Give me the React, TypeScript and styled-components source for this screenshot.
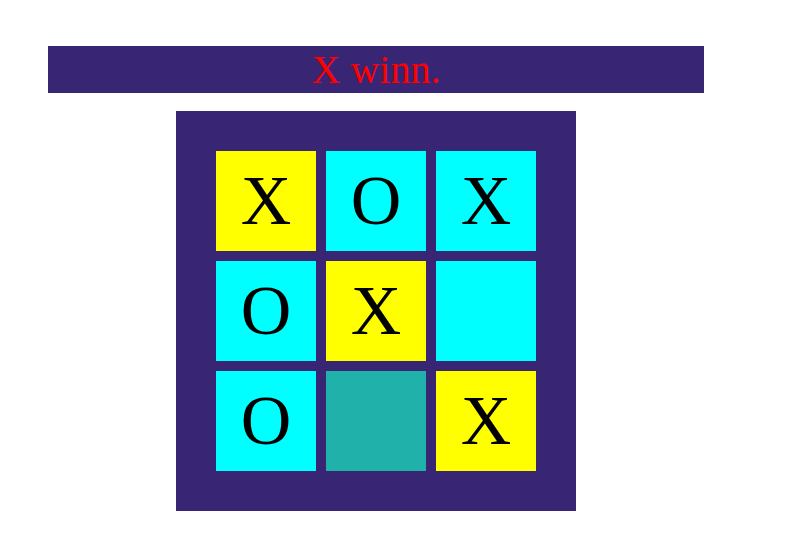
import React from 'react';
import styled, { createGlobalStyle } from 'styled-components';

type Mark = 'X' | 'O' | '';

const board: Mark[] = ['X', 'O', 'X', 'O', 'X', '', 'O', '', 'X'];
const winLine = [0, 4, 8];
const hovered = 7;

const App = () => (
    <>
        <GlobalStyle/>
        <Page>
            <Status>X winn.</Status>
            <Board>
                {board.map((mark, i) => (
                    <Cell
                        key={i}
                        $win={winLine.includes(i)}
                        $hover={i === hovered}
                    >
                        {mark}
                    </Cell>
                ))}
            </Board>
        </Page>
    </>
);

const GlobalStyle = createGlobalStyle`
    body {
        margin: 0;
        background: #ffffff;
        font-family: "Liberation Serif", "Times New Roman", serif;
    }
`;

const Page = styled.div`
    display: flex;
    flex-direction: column;
    align-items: center;
    width: 656px;
    padding: 46px 0 0 48px;
`;

const Status = styled.div`
    width: 100%;
    height: 47px;
    line-height: 47px;
    background-color: #382675;
    color: #ff0000;
    font-size: 40px;
    text-align: center;
`;

const Board = styled.div`
    margin-top: 18px;
    display: grid;
    grid-template-columns: repeat(3, 100px);
    grid-auto-rows: 100px;
    gap: 10px;
    padding: 40px;
    background-color: #382675;
`;

const Cell = styled.div<{ $win: boolean; $hover: boolean }>`
    display: flex;
    align-items: center;
    justify-content: center;
    font-size: 70px;
    color: #000000;
    background-color: ${p => (p.$win ? '#ffff00' : p.$hover ? '#20b2aa' : '#00ffff')};
`;

export default App;
